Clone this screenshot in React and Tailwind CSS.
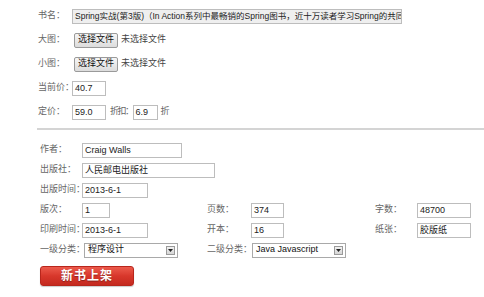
import React from "react";

const font = { fontFamily: '"Liberation Sans", "Noto Sans CJK SC", sans-serif' };

const Field = ({ value, className = "" }) => (
  <div
    className={`h-[15px] border border-[#bdbdbd] bg-white px-[2px] text-[9px] leading-[13px] text-[#222] whitespace-nowrap overflow-hidden ${className}`}
  >
    {value}
  </div>
);

const FileBtn = () => (
  <div className="flex items-center">
    <div className="h-[15px] w-[44px] ml-[2px] flex items-center justify-center rounded-[2px] border border-[#9a9a9a] bg-gradient-to-b from-[#f6f6f6] to-[#dcdcdc] text-[9px] text-[#111]">
      选择文件
    </div>
    <span className="ml-[3px] text-[9px] text-[#444]">未选择文件</span>
  </div>
);

const Select = ({ value, className = "" }) => (
  <div
    className={`h-[15px] w-[94px] border border-[#a9a9a9] bg-white flex items-center justify-between pl-[3px] pr-[2px] text-[9px] text-[#111] ${className}`}
  >
    <span>{value}</span>
    <div className="w-[9px] h-[9px] border border-[#9a9a9a] bg-gradient-to-b from-[#f2f2f2] to-[#d6d6d6] flex items-center justify-center">
      <svg width="5" height="3" viewBox="0 0 5 3">
        <path d="M0 0h5L2.5 3z" fill="#222" />
      </svg>
    </div>
  </div>
);

const Label = ({ children, className = "" }) => (
  <span className={`text-[9px] text-[#666] whitespace-nowrap ${className}`}>{children}</span>
);

const App = () => {
  return (
    <div className="w-[484px] h-[297px] bg-white overflow-hidden" style={font}>
      {/* top section */}
      <div className="pt-[4px] pl-[38px]">
        <div className="h-[24px] flex items-center">
          <Label className="w-[34px]">书名：</Label>
          <div className="h-[15px] w-[330px] border border-[#bdbdbd] bg-[#efefef] px-[2px] text-[8.5px] leading-[13px] text-[#222] whitespace-nowrap overflow-hidden">
            Spring实战(第3版)（In Action系列中最畅销的Spring图书，近十万读者学习Spring的共同选择）
          </div>
        </div>
        <div className="h-[24px] flex items-center">
          <Label className="w-[34px]">大图：</Label>
          <FileBtn />
        </div>
        <div className="h-[24px] flex items-center">
          <Label className="w-[34px]">小图：</Label>
          <FileBtn />
        </div>
        <div className="h-[24px] flex items-center">
          <Label className="w-[34px]">当前价：</Label>
          <Field className="w-[34px]" value="40.7" />
        </div>
        <div className="h-[24px] flex items-center">
          <Label className="w-[34px]">定价：</Label>
          <Field className="w-[34px]" value="59.0" />
          <Label className="ml-[4px] tracking-[-1.5px]">折扣：</Label>
          <Field className="w-[25px]" value="6.9" />
          <Label className="ml-[3px]">折</Label>
        </div>
      </div>

      <div className="ml-[37px] mt-[4px] border-t-2 border-[#d4d4d4]" />

      {/* detail section */}
      <div className="pl-[40px] pt-[10px]">
        <div className="h-[20px] flex items-center">
          <Label className="w-[42px]">作者：</Label>
          <Field className="w-[100px]" value="Craig Walls" />
        </div>
        <div className="h-[20px] flex items-center">
          <Label className="w-[42px]">出版社：</Label>
          <Field className="w-[133px]" value="人民邮电出版社" />
        </div>
        <div className="h-[20px] flex items-center">
          <Label className="w-[42px]">出版时间：</Label>
          <Field className="w-[66px]" value="2013-6-1" />
        </div>
        <div className="h-[20px] flex items-center">
          <Label className="w-[42px]">版次：</Label>
          <div className="w-[125px]">
            <Field className="w-[28px]" value="1" />
          </div>
          <Label className="w-[44px]">页数：</Label>
          <div className="w-[124px]">
            <Field className="w-[33px]" value="374" />
          </div>
          <Label className="w-[42px]">字数：</Label>
          <Field className="w-[54px]" value="48700" />
        </div>
        <div className="h-[20px] flex items-center">
          <Label className="w-[42px]">印刷时间：</Label>
          <div className="w-[125px]">
            <Field className="w-[66px]" value="2013-6-1" />
          </div>
          <Label className="w-[44px]">开本：</Label>
          <div className="w-[124px]">
            <Field className="w-[33px]" value="16" />
          </div>
          <Label className="w-[42px]">纸张：</Label>
          <Field className="w-[54px]" value="胶版纸" />
        </div>
        <div className="h-[20px] flex items-center">
          <Label className="w-[42px]">一级分类：</Label>
          <div className="w-[125px]">
            <Select className="ml-[2px]" value="程序设计" />
          </div>
          <Label className="w-[44px]">二级分类：</Label>
          <Select className="ml-[1px]" value="Java Javascript" />
        </div>

        <button className="mt-[6px] w-[94px] h-[20px] rounded-[3px] border border-[#b8261c] bg-gradient-to-b from-[#ec5a4c] via-[#d8372b] to-[#c42a1f] text-white text-[12px] font-bold tracking-[1px] [text-shadow:0_1px_1px_rgba(0,0,0,0.35)] shadow-[0_1px_1px_rgba(0,0,0,0.2)]">
          新书上架
        </button>
      </div>
    </div>
  );
};

export default App;
